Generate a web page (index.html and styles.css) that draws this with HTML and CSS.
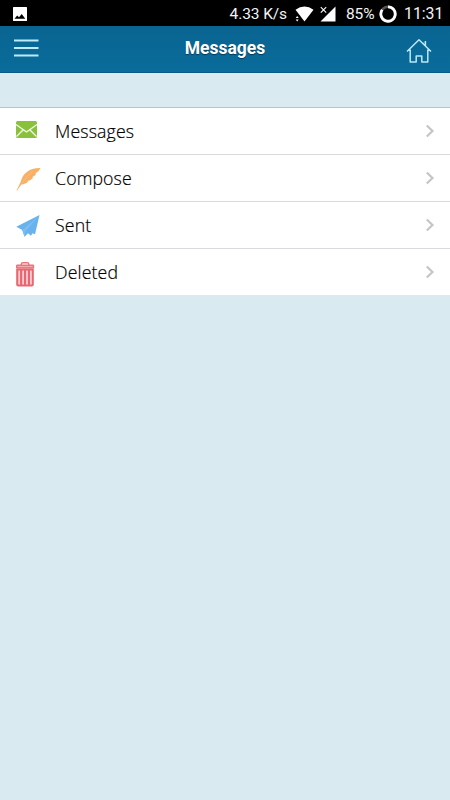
FILE: index.html
```html
<!DOCTYPE html>
<html lang="en">
<head>
<meta charset="utf-8">
<meta name="viewport" content="width=device-width, initial-scale=1">
<title>Messages</title>
<link rel="stylesheet" href="styles.css">
</head>
<body>
<div class="status">
  <svg class="photo" width="14" height="14" viewBox="0 0 14 14"><rect width="14" height="14" rx=".5" fill="#fff"/><path d="M1.5 11.8 4.2 8.5 6 10.2 8.7 7 12.3 11.8Z" fill="#000"/></svg>
  <span class="speed">4.33 K/s</span>
  <svg class="wifi" width="19" height="16" viewBox="0 0 19 16"><path d="M0.5 3.8Q9.5-2.6 18.5 3.8L9.5 15.5Z" fill="#fff"/><path d="M0 9H4.5V16H0Z" fill="#000"/><path d="M.7 12 2.2 10 3.7 12ZM.7 13.5 2.2 15.5 3.7 13.5Z" fill="#fff"/></svg>
  <svg class="signal" width="16" height="16" viewBox="0 0 16 16"><path d="M15.5.5V15.5H.5Z" fill="#fff"/><path d="M.8 1.2 6.2 6.6M6.2 1.2 .8 6.6" stroke="#fff" stroke-width="1.1"/></svg>
  <span class="percent">85%</span>
  <svg class="battery" width="18" height="18" viewBox="0 0 18 18"><circle cx="9" cy="9" r="7.2" fill="none" stroke="#555" stroke-width="2.6"/><path d="M9 1.8A7.2 7.2 0 1 1 3.2 4.8" fill="none" stroke="#fff" stroke-width="2.8"/></svg>
  <span class="clock">11:31</span>
</div>
<header class="header">
  <svg class="menu" width="25" height="20" viewBox="0 0 25 20"><path d="M0 2.5H24.5M0 10H24.5M0 17.5H24.5" stroke="#bdebfb" stroke-width="2.2"/></svg>
  <h1 class="title">Messages</h1>
  <svg class="home" width="26" height="26" viewBox="0 0 26 26" fill="none" stroke="#b9e8f8" stroke-width="1.5" stroke-linejoin="round"><path d="M1 13.5 13 1.7 25 13.5M4.2 11.5V24H10.2V18H15.8V24H21.8V11.5M17.7 5.3V4.8M19.4 3V8"/></svg>
</header>
<main>
<ul class="list">
  <li class="row">
    <svg class="icon" width="26" height="28" viewBox="0 0 26 28"><rect x="1" y="4" width="21" height="17" rx="1.5" fill="#89c13b"/><path d="M1 7.5 11.5 15 22 7.5M1.5 19.5 8 13M21.5 19.5 15 13" fill="none" stroke="#f2fae5" stroke-width="1.4"/></svg>
    <span class="label">Messages</span>
    <svg class="chevron" width="10" height="14" viewBox="0 0 10 14"><path d="M1.8 1.5 7.5 7 1.8 12.5"/></svg>
  </li>
  <li class="row">
    <svg class="icon" width="26" height="28" viewBox="0 0 26 28"><path d="M1.5 26.5C3.5 22 5.5 19 6.3 16C8 10.5 13 4 25.5 4C24.5 6 23 7.5 21.7 8.5L20 9.2 21.3 9.5C20.6 11 19.5 12 18 12.7L16.8 13.1 18.2 13.5C17 15.2 15.5 16.3 13.5 16.8L12 17 13.3 17.6C11.5 19.5 9 20.4 6.5 20.4C4.8 22.3 3.3 24.5 2.3 26.5Z" fill="#f8af66"/><path d="M7 19.5C10 15 13.5 10.5 18 7.5" fill="none" stroke="#fbc891" stroke-width=".6"/></svg>
    <span class="label">Compose</span>
    <svg class="chevron" width="10" height="14" viewBox="0 0 10 14"><path d="M1.8 1.5 7.5 7 1.8 12.5"/></svg>
  </li>
  <li class="row">
    <svg class="icon" width="26" height="28" viewBox="0 0 26 28"><path d="M24.5 4 1.3 15.8 7.3 19 9.5 25.8 13 22.3 16 24.8 17.6 22.2 20 23.2Z" fill="#68b2ee"/><path d="M24 4.7 7.3 19 9.5 25.8 10.6 20.2Z" fill="#7bbdf1"/></svg>
    <span class="label">Sent</span>
    <svg class="chevron" width="10" height="14" viewBox="0 0 10 14"><path d="M1.8 1.5 7.5 7 1.8 12.5"/></svg>
  </li>
  <li class="row">
    <svg class="icon icon-trash" width="26" height="28" viewBox="0 0 26 28"><path d="M6.3 4V3.2Q6.3 1.8 8 1.8H12.2Q13.9 1.8 13.9 3.2V4" fill="none" stroke="#e9747c" stroke-width="1.4"/><rect x="1" y="3.5" width="18.2" height="4.2" rx="1.2" fill="#e9747c"/><path d="M2.5 5.6H17.7" stroke="#f7b2b7"/><path d="M1.2 7.7H18.8V23.5Q18.8 25.6 16.8 25.6H3.2Q1.2 25.6 1.2 23.5Z" fill="#e96670"/><path d="M4.2 9.5V23.5M8.1 9.5V23.5M12 9.5V23.5M15.9 9.5V23.5" stroke="#ffd5d7" stroke-width="1.7"/></svg>
    <span class="label">Deleted</span>
    <svg class="chevron" width="10" height="14" viewBox="0 0 10 14"><path d="M1.8 1.5 7.5 7 1.8 12.5"/></svg>
  </li>
</ul>
</main>
</body>
</html>
```
FILE: styles.css
```css
* { box-sizing: border-box; }
body {
  margin: 0;
  min-height: 100vh;
  background: #daeaf1;
  font-family: "Open Sans", "Noto Sans", sans-serif;
}
svg { display: block; flex: none; }
.status {
  display: flex;
  align-items: center;
  height: 26px;
  padding: 1px 8px 0 13px;
  background: #000;
  color: #f4f4f4;
  font: 16px/24px Roboto, sans-serif;
  white-space: nowrap;
}
.speed { margin-left: auto; font-size: 15.5px; letter-spacing: -.1px; }
.wifi { margin-left: 8px; }
.signal { margin-left: 6px; }
.percent { margin-left: 10px; width: 28px; font-size: 15.5px; letter-spacing: -.1px; }
.battery { margin-left: 5px; }
.clock { margin-left: 7px; width: 38px; font-size: 15.8px; }
.header {
  display: flex;
  align-items: center;
  justify-content: space-between;
  height: 47px;
  padding: 0 18px 0 14px;
  background: linear-gradient(#0a6491, #096c9b);
  border-bottom: 1px solid #075d87;
}
.menu { margin-top: -3px; }
.title {
  margin: -2px 0 0 5px;
  color: #fff;
  font: bold 17.5px/24px Roboto, sans-serif;
  text-shadow: 0 1px 1px #033a57;
}
.home { margin-top: 3px; }
.list {
  margin: 34px 0 0;
  padding: 0;
  list-style: none;
}
.row {
  display: flex;
  align-items: center;
  height: 47px;
  padding: 0 15px;
  background: #fff;
  border-top: 1px solid #d9dadd;
}
.row:first-child { border-top-color: #b4c6d5; }
.icon-trash { margin-top: 5px; }
.label {
  flex: 1;
  margin-left: 14px;
  color: #000;
  font-size: 17.7px;
  font-weight: 350;
  letter-spacing: .15px;
  line-height: 24px;
  -webkit-text-stroke: .2px #000;
}
.chevron { fill: none; stroke: #c5c5c5; stroke-width: 2.2; }
```
